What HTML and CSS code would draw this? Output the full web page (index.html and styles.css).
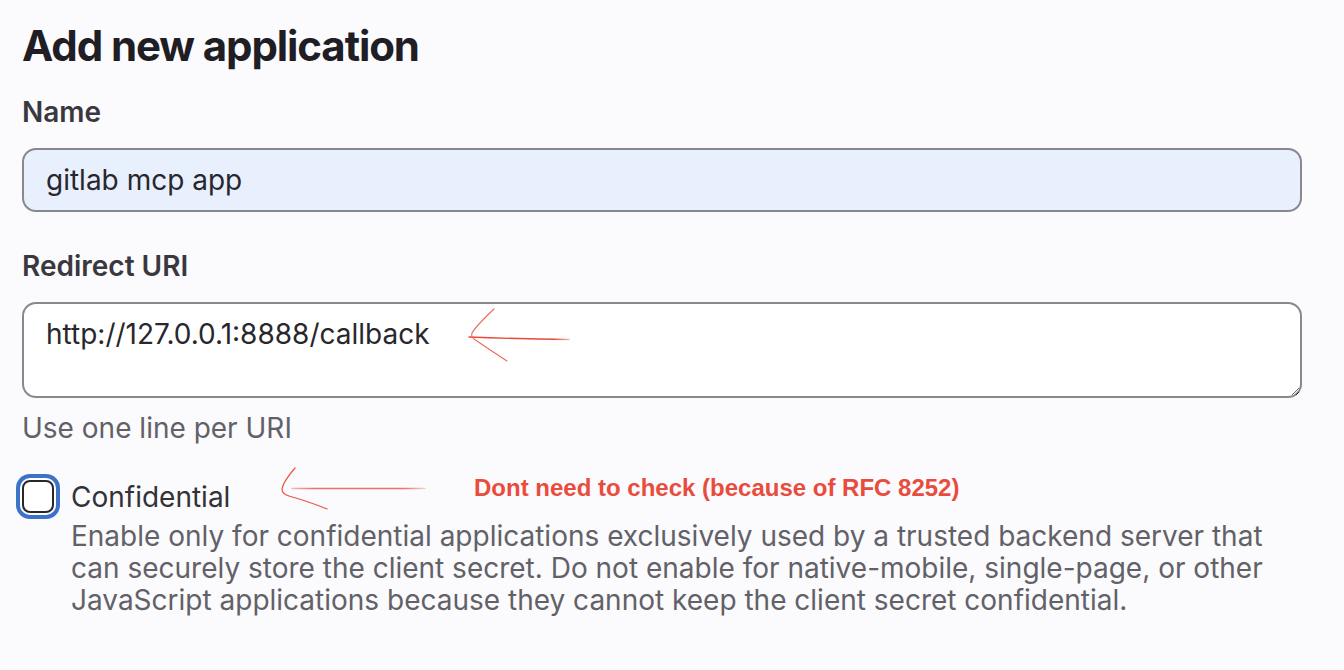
FILE: index.html
```html
<!DOCTYPE html>
<html lang="en">
<head>
<meta charset="utf-8">
<title>Add new application</title>
<link rel="stylesheet" href="styles.css">
</head>
<body>
<main class="page">
  <h1 class="title">Add new application</h1>

  <div class="form-group">
    <label class="label" for="app-name">Name</label>
    <input class="input autofilled" id="app-name" type="text" value="gitlab mcp app">
  </div>

  <div class="form-group uri-group">
    <label class="label" for="redirect">Redirect URI</label>
    <textarea class="input textarea" id="redirect">http://127.0.0.1:8888/callback</textarea>
    <p class="help">Use one line per URI</p>
  </div>

  <div class="check-row">
    <span class="checkbox"></span>
    <div class="check-text">
      <div class="check-label">Confidential</div>
      <p class="check-help">Enable only for confidential applications exclusively used by a trusted backend server that can securely store the client secret. Do not enable for native-mobile, single-page, or other JavaScript applications because they cannot keep the client secret confidential.</p>
    </div>
  </div>

  <div class="note">Dont need to check (because of RFC 8252)</div>

  <svg class="marks" width="1344" height="670" viewBox="0 0 1344 670" aria-hidden="true">
    <defs>
      <linearGradient id="fade1" x1="469" y1="0" x2="569" y2="0" gradientUnits="userSpaceOnUse">
        <stop offset="0" stop-color="#e8493a"/>
        <stop offset="0.85" stop-color="#e8493a"/>
        <stop offset="1" stop-color="#e8493a" stop-opacity="0.4"/>
      </linearGradient>
      <linearGradient id="fade2" x1="292" y1="0" x2="425" y2="0" gradientUnits="userSpaceOnUse">
        <stop offset="0" stop-color="#ee7566" stop-opacity="0.5"/>
        <stop offset="0.15" stop-color="#ee7566"/>
        <stop offset="0.85" stop-color="#ee7566"/>
        <stop offset="1" stop-color="#ee7566" stop-opacity="0.3"/>
      </linearGradient>
    </defs>
    <g fill="none" stroke-linecap="round">
      <path d="M469 337 Q520 339 569 339.5" stroke="url(#fade1)" stroke-width="1.4"/>
      <path d="M494 309 Q476 326 472 333 Q471 337 474 339 Q490 350 507 361" stroke="#ee6a5a" stroke-width="1.1"/>
      <path d="M292 488.5 L425 488.5" stroke="url(#fade2)" stroke-width="1.6"/>
      <path d="M295 468 Q283 482 282 489 Q282 494 289 496 Q310 502 327 509" stroke="#ea5544" stroke-width="1.2"/>
    </g>
  </svg>
</main>
</body>
</html>
```

FILE: styles.css
```css
html, body {
  margin: 0;
  padding: 0;
  background: #fbfafd;
}

body {
  font-family: Inter, "Noto Sans", sans-serif;
  color: #333238;
}

.page {
  position: relative;
  width: 1344px;
  height: 670px;
  box-sizing: border-box;
  padding: 18px 0 0 22px;
  overflow: hidden;
}

.title {
  margin: 0 0 18px;
  font-size: 42px;
  line-height: 56px;
  font-weight: 700;
  color: #1f1e24;
  letter-spacing: -1.1px;
}

.form-group {
  display: flex;
  flex-direction: column;
  width: 1280px;
  margin-bottom: 34px;
}

.label {
  font-size: 28px;
  line-height: 40px;
  font-weight: 600;
  color: #3a383f;
  margin-bottom: 16px;
}

.input {
  box-sizing: border-box;
  width: 1280px;
  height: 64px;
  margin: 0;
  padding: 10px 22px;
  border: 2px solid #89888d;
  border-radius: 14px;
  background: #ffffff;
  font-family: Inter, "Noto Sans", sans-serif;
  font-size: 28px;
  line-height: 40px;
  color: #28272d;
  outline: none;
}

.autofilled {
  background: #e8f0fe;
}

.textarea {
  height: 96px;
  resize: vertical;
  display: block;
}

.help {
  margin: 10px 0 0;
  font-size: 28px;
  line-height: 40px;
  color: #626168;
}

.uri-group {
  margin-bottom: 29px;
}

.check-row {
  display: flex;
  align-items: flex-start;
  gap: 17px;
}

.checkbox {
  flex: none;
  box-sizing: border-box;
  width: 32px;
  height: 33px;
  margin-top: 3px;
  border: 2px solid #28272d;
  border-radius: 8px;
  background: #ffffff;
  box-shadow: 0 0 0 2px #ffffff, 0 0 0 6px #3c73c8;
}

.check-text {
  width: 1220px;
}

.check-label {
  font-size: 28px;
  line-height: 40px;
  color: #333238;
}

.check-help {
  margin: 3px 0 0;
  font-size: 28px;
  line-height: 32px;
  color: #626168;
}

.note {
  position: absolute;
  left: 474px;
  top: 474px;
  font-family: "Liberation Sans", Arial, sans-serif;
  font-weight: 700;
  font-size: 24px;
  line-height: normal;
  color: #e84c3d;
  white-space: nowrap;
}

.marks {
  position: absolute;
  left: 0;
  top: 0;
  pointer-events: none;
}
```
